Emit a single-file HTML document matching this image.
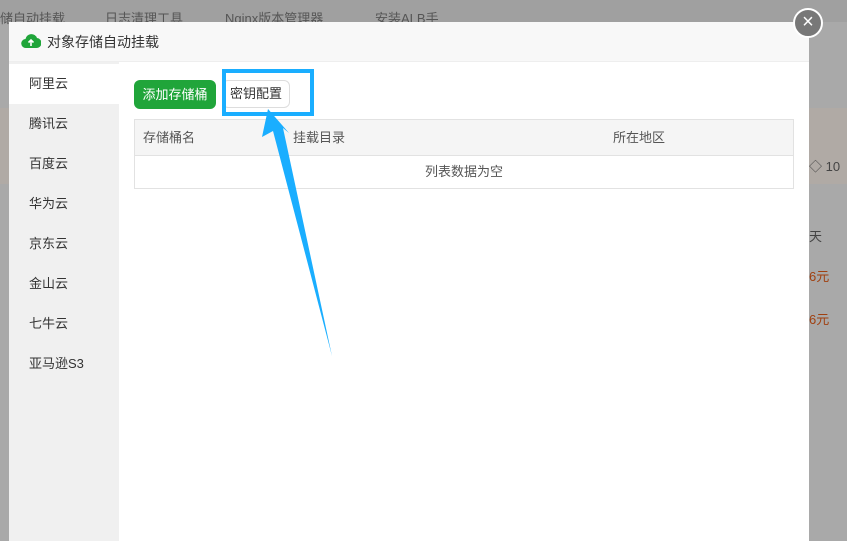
<!DOCTYPE html>
<html><head><meta charset="utf-8"><style>
*{margin:0;padding:0;box-sizing:border-box}
body{width:847px;height:541px;overflow:hidden;background:#a9a9a9;font-family:"Liberation Sans","Noto Sans CJK SC",sans-serif;font-size:13px;color:#333;position:relative}
.bgtop{position:absolute;left:0;top:0;width:847px;height:22px;background:#a0a0a0;color:#555;font-size:13px}
.modal{position:absolute;left:9px;top:22px;width:800px;height:519px;background:#fff}
.hd{height:40px;background:#f8f8f8;border-bottom:1px solid #eee;line-height:40px;padding-left:38px;font-size:14px;color:#333;position:relative}
.side{position:absolute;left:0;top:40px;width:110px;bottom:0;background:#f0f0f0;padding-top:2px}
.side div{height:40px;line-height:40px;padding-left:20px;font-size:13px;color:#333}
.side .on{background:#fff}
.btn{position:absolute;top:58px;height:29px;line-height:29px;border-radius:6px;font-size:13px;text-align:center}
.tbl{position:absolute;left:125px;top:97px;width:660px;height:70px;border:1px solid #e2e2e2}
.th{height:36px;background:#f5f5f5;border-bottom:1px solid #e2e2e2;position:relative;line-height:36px;color:#555}
.th span{position:absolute}
.td{text-align:center;line-height:32px;color:#555}
.close{position:absolute;left:793px;top:8px;width:30px;height:30px;border-radius:50%;background:#787878;border:2px solid #fff;color:#fff;text-align:center;line-height:25px;font-size:20px}
</style></head><body>
<div class="bgtop"><span style="position:absolute;left:0;top:8px">储自动挂载</span><span style="position:absolute;left:105px;top:8px">日志清理工具</span><span style="position:absolute;left:225px;top:8px">Nginx版本管理器</span><span style="position:absolute;left:375px;top:8px">安装ALB手</span></div>
<div style="position:absolute;left:809px;top:108px;width:38px;height:76px;background:#b0aaa5"></div>
<div style="position:absolute;left:809px;top:156px;color:#444;font-size:13px">◇ 10</div>
<div style="position:absolute;left:809px;top:226px;color:#444">天</div>
<div style="position:absolute;left:809px;top:266px;color:#a04010">6元</div>
<div style="position:absolute;left:809px;top:309px;color:#a04010">6元</div>
<div style="position:absolute;left:0;top:108px;width:9px;height:76px;background:#b0aaa5"></div>
<div class="modal">
 <div class="hd"><svg style="position:absolute;left:12px;top:11px" width="20" height="16" viewBox="0 0 20 16"><path d="M5 15a4.5 4.5 0 0 1-.5-9A6 6 0 0 1 16 5a4.5 4.5 0 0 1-1 10z" fill="#20a53a"/><path d="M10 13V7M7.5 9.5L10 7l2.5 2.5" stroke="#fff" stroke-width="1.6" fill="none"/></svg>对象存储自动挂载</div>
 <div class="side"><div class="on">阿里云</div><div>腾讯云</div><div>百度云</div><div>华为云</div><div>京东云</div><div>金山云</div><div>七牛云</div><div>亚马逊S3</div></div>
 <div class="btn" style="left:125px;width:82px;background:#20a53a;color:#fff">添加存储桶</div>
 <div class="btn" style="left:213px;width:68px;border:1px solid #ddd;color:#333;height:28px;line-height:26px">密钥配置</div>
 <div class="tbl"><div class="th"><span style="left:8px">存储桶名</span><span style="left:158px">挂载目录</span><span style="left:478px">所在地区</span></div><div class="td">列表数据为空</div></div>
</div>
<div style="position:absolute;left:222px;top:69px;width:92px;height:47px;border:4px solid #1aaeff"></div>
<svg style="position:absolute;left:0;top:0" width="847" height="541"><polygon points="268,109 262,137 273,131 332,356 283,128 289,133" fill="#1aaeff"/></svg>
<div class="close">×</div>
</body></html>
